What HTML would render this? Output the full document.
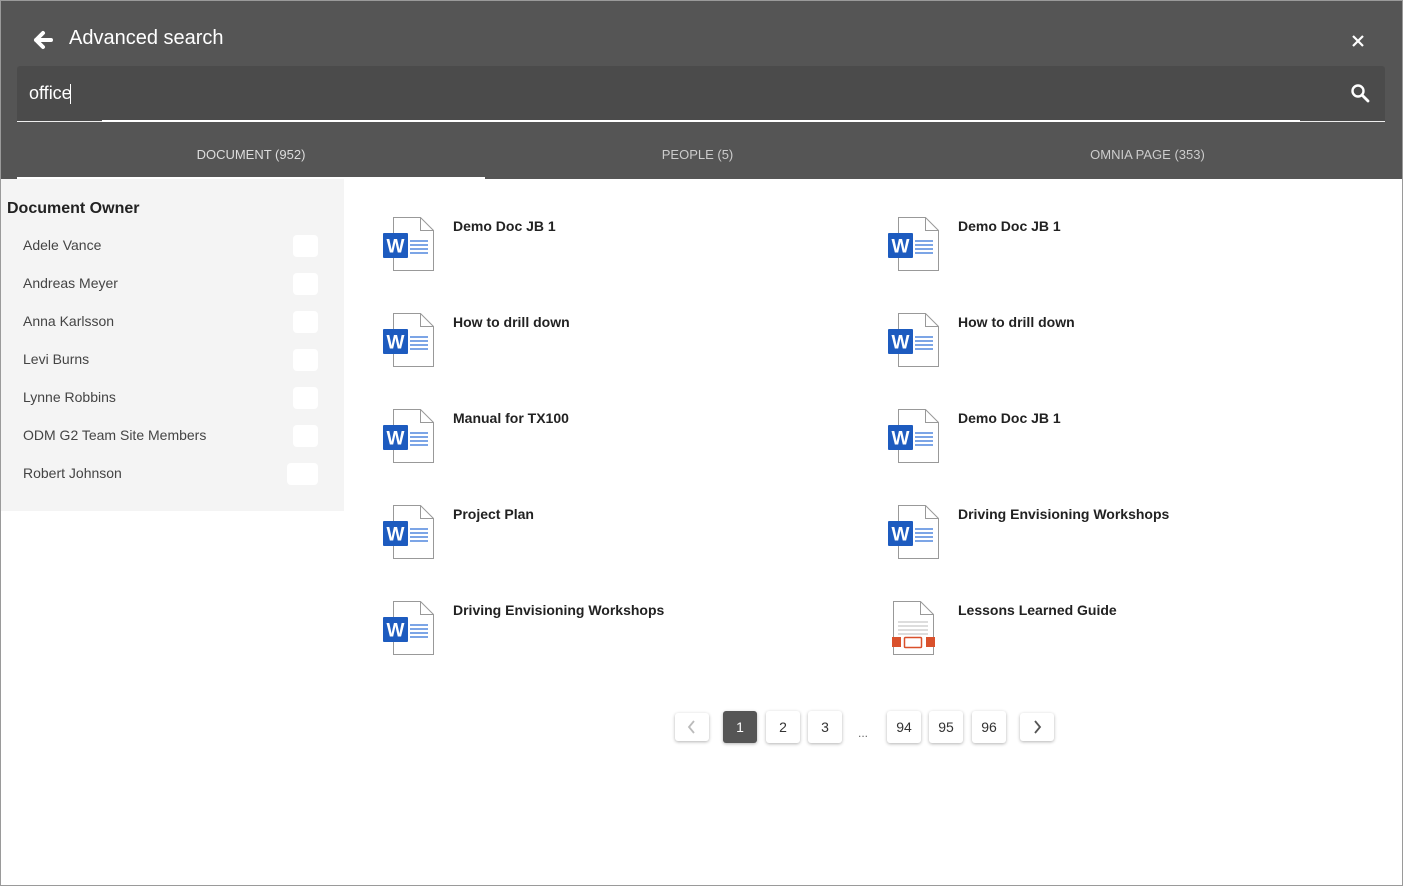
<!DOCTYPE html>
<html><head><meta charset="utf-8"><style>
*{box-sizing:border-box;margin:0;padding:0}
body{width:1403px;height:886px;background:#fff;font-family:"Liberation Sans",sans-serif;position:relative;overflow:hidden}
.frame{position:absolute;left:0;top:0;width:1403px;height:886px;border:1px solid #9a9a9a;z-index:5;pointer-events:none}
.hdr{position:absolute;left:0;top:0;width:1403px;height:179px;background:#555}
.abs{position:absolute}
.title{left:69px;top:27px;color:#fff;font-size:20px}
.search{left:17px;top:66px;width:1368px;height:56px;background:#4b4b4b;border-radius:3px 3px 0 0}
.tab{top:147px;color:#ddd;font-size:13px;text-align:center}
.side{left:0;top:179px;width:344px;height:332px;background:#f4f4f4}
.side h3{position:absolute;left:7px;top:21px;font-size:16px;color:#222;font-weight:bold}
.it{position:absolute;left:23px;font-size:14px;color:#444}
.bd{position:absolute;left:293px;width:25px;height:22px;background:#fff;border-radius:4px}
.doc{position:absolute;width:52px;height:58px}
.dt{position:absolute;font-size:14px;font-weight:bold;color:#222}
.pg{position:absolute;top:711px;height:32px;width:34px;background:#fff;border-radius:3px;box-shadow:0 1px 3px rgba(0,0,0,.3);text-align:center;line-height:32px;font-size:14px;color:#333}
</style></head><body>
<div class="frame"></div>
<div class="hdr"></div>
<svg class="abs" style="left:33px;top:30px" width="20" height="20" viewBox="0 0 20 20"><path d="M10 3 L3 10 L10 17 M3 10 H18" stroke="#fff" stroke-width="4" fill="none" stroke-linejoin="round" stroke-linecap="round"/></svg>
<div class="abs title">Advanced search</div>
<svg class="abs" style="left:1352px;top:35px" width="12" height="12"><path d="M1 1L11 11M11 1L1 11" stroke="#fff" stroke-width="2.2"/></svg>
<div class="abs search"></div>
<div class="abs" style="left:29px;top:83px;color:#fff;font-size:18px">office</div>
<div class="abs" style="left:70px;top:84px;width:1px;height:20px;background:#fff"></div>
<svg class="abs" style="left:1350px;top:83px" width="20" height="20"><circle cx="8" cy="8" r="5.5" stroke="#fff" stroke-width="2.4" fill="none"/><path d="M12 12L18 18" stroke="#fff" stroke-width="2.8" stroke-linecap="round"/></svg>
<div class="abs" style="left:17px;top:121px;width:85px;height:1px;background:#eee"></div>
<div class="abs" style="left:102px;top:120px;width:1198px;height:2px;background:#fff"></div>
<div class="abs" style="left:1300px;top:121px;width:85px;height:1px;background:#eee"></div>
<div class="abs tab" style="left:17px;width:468px">DOCUMENT (952)</div>
<div class="abs tab" style="left:485px;width:425px;color:#ccc">PEOPLE (5)</div>
<div class="abs tab" style="left:910px;width:475px;color:#ccc">OMNIA PAGE (353)</div>
<div class="abs" style="left:17px;top:177px;width:468px;height:2px;background:#fff"></div>
<div class="abs side"><h3>Document Owner</h3></div>
<div class="it" style="top:237px">Adele Vance</div><div class="bd" style="top:235px"></div>
<div class="it" style="top:275px">Andreas Meyer</div><div class="bd" style="top:273px"></div>
<div class="it" style="top:313px">Anna Karlsson</div><div class="bd" style="top:311px"></div>
<div class="it" style="top:351px">Levi Burns</div><div class="bd" style="top:349px"></div>
<div class="it" style="top:389px">Lynne Robbins</div><div class="bd" style="top:387px"></div>
<div class="it" style="top:427px">ODM G2 Team Site Members</div><div class="bd" style="top:425px"></div>
<div class="it" style="top:465px">Robert Johnson</div><div class="bd" style="top:463px;left:287px;width:31px"></div>
<svg width="0" height="0" style="position:absolute"><defs>
<g id="w"><path d="M10.5 1.5H37.5L50.5 14.5V54.5H10.5Z" fill="#fff" stroke="#999"/><path d="M37.5 1.5V14.5H50.5" fill="none" stroke="#999"/><rect x="0" y="17" width="25" height="25" rx="1" fill="#1d5bbf"/><text x="12.5" y="36.5" font-family="Liberation Sans" font-weight="bold" font-size="19" fill="#fff" text-anchor="middle">W</text><path d="M27 25H45M27 29H45M27 33H45M27 37H45" stroke="#2e6fd6" stroke-width="1.2"/></g>
<g id="p"><path d="M10.5 1.5H37.5L50.5 14.5V54.5H10.5Z" fill="#fff" stroke="#999"/><path d="M37.5 1.5V14.5H50.5" fill="none" stroke="#999"/><path d="M15 22H45M15 26H45M15 30H45M15 34H45" stroke="#bbb"/><rect x="9" y="37" width="9" height="10" fill="#d9512c"/><rect x="43" y="37" width="9" height="10" fill="#d9512c"/><rect x="21.5" y="37.5" width="17" height="10" rx="1" fill="#fff" stroke="#d9512c" stroke-width="1.5"/></g>
</defs></svg>
<svg class="doc" style="left:383px;top:216px"><use href="#w"/></svg><div class="dt" style="left:453px;top:218px">Demo Doc JB 1</div>
<svg class="doc" style="left:888px;top:216px"><use href="#w"/></svg><div class="dt" style="left:958px;top:218px">Demo Doc JB 1</div>
<svg class="doc" style="left:383px;top:312px"><use href="#w"/></svg><div class="dt" style="left:453px;top:314px">How to drill down</div>
<svg class="doc" style="left:888px;top:312px"><use href="#w"/></svg><div class="dt" style="left:958px;top:314px">How to drill down</div>
<svg class="doc" style="left:383px;top:408px"><use href="#w"/></svg><div class="dt" style="left:453px;top:410px">Manual for TX100</div>
<svg class="doc" style="left:888px;top:408px"><use href="#w"/></svg><div class="dt" style="left:958px;top:410px">Demo Doc JB 1</div>
<svg class="doc" style="left:383px;top:504px"><use href="#w"/></svg><div class="dt" style="left:453px;top:506px">Project Plan</div>
<svg class="doc" style="left:888px;top:504px"><use href="#w"/></svg><div class="dt" style="left:958px;top:506px">Driving Envisioning Workshops</div>
<svg class="doc" style="left:383px;top:600px"><use href="#w"/></svg><div class="dt" style="left:453px;top:602px">Driving Envisioning Workshops</div>
<svg class="doc" style="left:883px;top:600px"><use href="#p"/></svg><div class="dt" style="left:958px;top:602px">Lessons Learned Guide</div>
<div class="pg" style="left:675px;top:713px;height:28px"><svg width="34" height="28"><path d="M19 8L14 14L19 20" stroke="#bbb" stroke-width="1.8" fill="none"/></svg></div>
<div class="pg" style="left:723px;background:#555;color:#fff">1</div>
<div class="pg" style="left:766px">2</div>
<div class="pg" style="left:808px">3</div>
<div class="abs" style="left:858px;top:726px;font-size:12px;color:#666">...</div>
<div class="pg" style="left:887px">94</div>
<div class="pg" style="left:929px">95</div>
<div class="pg" style="left:972px">96</div>
<div class="pg" style="left:1020px;top:713px;height:28px"><svg width="34" height="28"><path d="M15 8L20 14L15 20" stroke="#555" stroke-width="1.8" fill="none"/></svg></div>
</body></html>
